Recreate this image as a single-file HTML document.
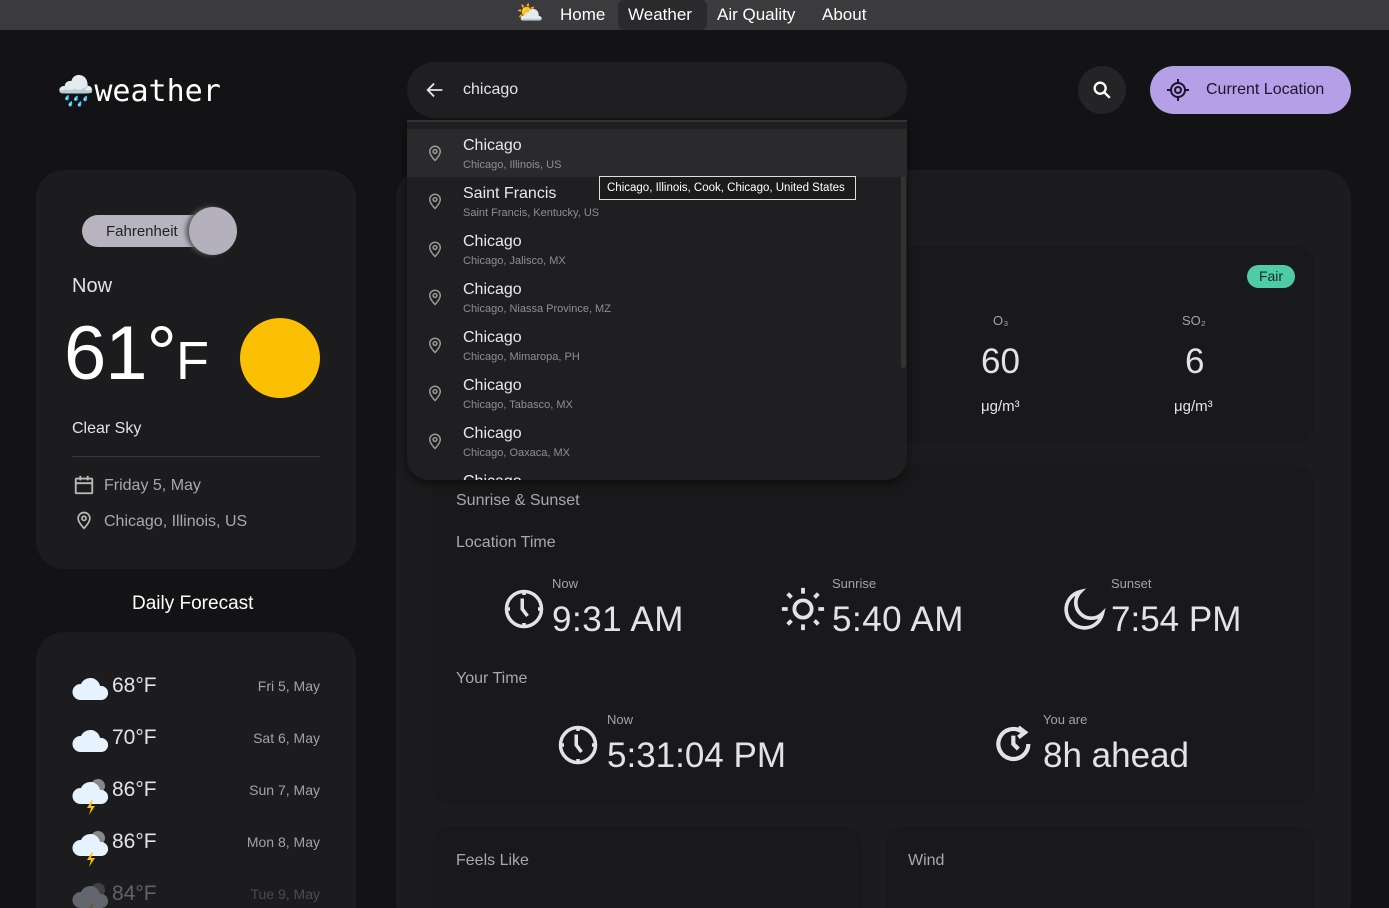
<!DOCTYPE html>
<html><head><meta charset="utf-8"><style>
*{box-sizing:border-box;margin:0;padding:0}
html{width:1389px;height:908px;overflow:hidden}
body{width:1389px;height:908px;overflow:hidden;background:#131315;font-family:"Liberation Sans",sans-serif;color:#e4e2e8;position:relative}
.a{position:absolute}
.nav{left:0;top:0;width:1389px;height:30px;background:#3b3b3d}
.nav span{position:absolute;top:5px;font-size:17px;color:#fff}
.card{background:#1c1c1e;border-radius:28px}
.in{background:#19191b;border-radius:20px}
.g{color:#a9a8ad}
.pin{width:18px;height:22px}
.dd .it{position:absolute;left:0;width:500px;height:48px}
.dd .t{position:absolute;left:56px;top:8px;font-size:16px;color:#e8e8ea}
.dd .s{position:absolute;left:56px;top:30px;font-size:11px;color:#8f8e93}
.dd svg{position:absolute;left:19px;top:13px}
.fc{position:absolute;left:72px;width:250px;height:40px}
.fc svg{position:absolute;left:0;top:2px}
.fc .tp{position:absolute;left:40px;top:6px;font-size:21px}
.fc .dt{position:absolute;right:2px;top:10px;font-size:14px;color:#a3a2a7}
.big{font-size:35px;color:#e4e2e8}
.lbl{font-size:13px;color:#a3a2a7}
</style></head><body>
<svg width="0" height="0" style="position:absolute"><defs>
<g id="cl"><path d="M8 30a8 8 0 0 1 1-16 10 10 0 0 1 19 2 7 7 0 0 1 2 14z" fill="#e6f3ff"/></g>
<g id="st"><circle cx="26" cy="12" r="7" fill="#888"/><path d="M8 30a8 8 0 0 1 1-16 10 10 0 0 1 19 2 7 7 0 0 1 2 14z" fill="#e6f3ff"/><path d="M20 26l-5 8h4l-2 7 6-9h-4l2-6z" fill="#fbbf04"/></g>
</defs></svg>
<div class="a nav">
 <span style="left:516px;top:0;font-size:22px">⛅</span>
 <span style="left:560px">Home</span>
 <div class="a" style="left:618px;top:0;width:89px;height:30px;background:#2a2a2c;border-radius:6px"></div>
 <span style="left:628px">Weather</span>
 <span style="left:717px">Air Quality</span>
 <span style="left:822px">About</span>
</div>

<div class="a" style="left:57px;top:74px;font-size:30px;color:#fff">🌧️<span style="font-family:'DejaVu Sans Mono',monospace">weather</span></div>

<div class="a" style="left:407px;top:62px;width:500px;height:56px;background:#1f1f21;border-radius:28px"></div>
<svg class="a" style="left:424px;top:79px" width="22" height="22" viewBox="0 0 24 24"><path d="M20 12H5M11 5l-7 7 7 7" stroke="#e4e2e8" stroke-width="2" fill="none"/></svg>
<div class="a" style="left:463px;top:81px;font-size:16px">chicago</div>
<div class="a" style="left:1078px;top:66px;width:48px;height:48px;border-radius:50%;background:#242426"></div>
<svg class="a" style="left:1091px;top:79px" width="22" height="22" viewBox="0 0 24 24"><circle cx="10" cy="10" r="6" stroke="#fff" stroke-width="2.5" fill="none"/><path d="M14.5 14.5l6 6" stroke="#fff" stroke-width="2.5"/></svg>
<div class="a" style="left:1150px;top:66px;width:201px;height:48px;border-radius:24px;background:#b59fe6"></div>
<svg class="a" style="left:1166px;top:78px" width="24" height="24" viewBox="0 0 24 24"><circle cx="12" cy="12" r="7" stroke="#1c1530" stroke-width="2" fill="none"/><circle cx="12" cy="12" r="3" stroke="#1c1530" stroke-width="2" fill="none"/><path d="M12 1v4M12 19v4M1 12h4M19 12h4" stroke="#1c1530" stroke-width="2"/></svg>
<div class="a" style="left:1206px;top:81px;font-size:16px;color:#1c1530">Current Location</div>

<div class="a card" style="left:36px;top:170px;width:320px;height:399px"></div>
<div class="a" style="left:82px;top:215px;width:140px;height:32px;border-radius:16px;background:#b7b4bf"></div>
<div class="a" style="left:106px;top:223px;font-size:15px;color:#222">Fahrenheit</div>
<div class="a" style="left:189px;top:207px;width:48px;height:48px;border-radius:50%;background:#b4b1bc;box-shadow:-3px 0 5px #555"></div>
<div class="a" style="left:72px;top:275px;font-size:20px">Now</div>
<div class="a" style="left:64px;top:310px;font-size:76px;color:#fff;letter-spacing:-1px">61°<span style="font-size:54px">F</span></div>
<div class="a" style="left:240px;top:318px;width:80px;height:80px;border-radius:50%;background:#fbbf04"></div>
<div class="a" style="left:72px;top:420px;font-size:16px">Clear Sky</div>
<div class="a" style="left:72px;top:456px;width:248px;height:1px;background:#38383b"></div>
<svg class="a" style="left:73px;top:474px" width="22" height="22" viewBox="0 0 24 24"><rect x="3" y="5" width="18" height="16" rx="1" stroke="#bbb" stroke-width="2" fill="none"/><path d="M3 10h18M8 2v5M16 2v5" stroke="#bbb" stroke-width="2"/></svg>
<div class="a g" style="left:104px;top:477px;font-size:16px">Friday 5, May</div>
<svg class="a" style="left:74px;top:509px" width="20" height="22" viewBox="0 0 24 24"><path d="M12 22s-7-7-7-12a7 7 0 0 1 14 0c0 5-7 12-7 12z" stroke="#bbb" stroke-width="2" fill="none"/><circle cx="12" cy="10" r="2.5" stroke="#bbb" stroke-width="2" fill="none"/></svg>
<div class="a g" style="left:104px;top:513px;font-size:16px">Chicago, Illinois, US</div>

<div class="a" style="left:132px;top:593px;font-size:19px;color:#fff">Daily Forecast</div>
<div class="a card" style="left:36px;top:632px;width:320px;height:300px"></div>
<div class="fc" style="top:668px"><svg width="38" height="42" viewBox="0 0 38 42"><use href="#cl"/></svg><span class="tp">68°F</span><span class="dt">Fri 5, May</span></div>
<div class="fc" style="top:720px"><svg width="38" height="42" viewBox="0 0 38 42"><use href="#cl"/></svg><span class="tp">70°F</span><span class="dt">Sat 6, May</span></div>
<div class="fc" style="top:772px"><svg width="38" height="42" viewBox="0 0 38 42"><use href="#st"/></svg><span class="tp">86°F</span><span class="dt">Sun 7, May</span></div>
<div class="fc" style="top:824px"><svg width="38" height="42" viewBox="0 0 38 42"><use href="#st"/></svg><span class="tp">86°F</span><span class="dt">Mon 8, May</span></div>
<div class="fc" style="top:876px;opacity:.35"><svg width="38" height="42" viewBox="0 0 38 42"><use href="#st"/></svg><span class="tp">84°F</span><span class="dt">Tue 9, May</span></div>

<div class="a card" style="left:396px;top:170px;width:955px;height:760px"></div>
<div class="a in" style="left:432px;top:246px;width:883px;height:198px"></div>
<div class="a" style="left:1247px;top:265px;width:48px;height:23px;border-radius:12px;background:#4fcca6;color:#0f2a22;font-size:14px;text-align:center;line-height:23px">Fair</div>
<div class="a lbl" style="left:993px;top:313px">O₃</div>
<div class="a big" style="left:981px;top:342px">60</div>
<div class="a" style="left:981px;top:398px;font-size:15px">μg/m³</div>
<div class="a lbl" style="left:1182px;top:313px">SO₂</div>
<div class="a big" style="left:1185px;top:342px">6</div>
<div class="a" style="left:1174px;top:398px;font-size:15px">μg/m³</div>

<div class="a in" style="left:432px;top:465px;width:883px;height:340px"></div>
<div class="a g" style="left:456px;top:492px;font-size:16px">Sunrise &amp; Sunset</div>
<div class="a g" style="left:456px;top:534px;font-size:16px">Location Time</div>
<svg class="a" style="left:503px;top:588px" width="42" height="42" viewBox="0 0 24 24"><circle cx="12" cy="12" r="10" stroke="#e4e2e8" stroke-width="2" fill="none"/><path d="M11 6v6l3 4M12 2v2M12 20v2M2 12h2M20 12h2" stroke="#e4e2e8" stroke-width="2" fill="none"/></svg>
<div class="a lbl" style="left:552px;top:576px">Now</div>
<div class="a big" style="left:552px;top:600px;letter-spacing:0.5px">9:31 AM</div>
<svg class="a" style="left:780px;top:586px" width="46" height="46" viewBox="0 0 24 24"><circle cx="12" cy="12" r="4.5" stroke="#e4e2e8" stroke-width="2" fill="none"/><path d="M12 1v3M12 20v3M1 12h3M20 12h3M4 4l2 2M18 18l2 2M4 20l2-2M18 6l2-2" stroke="#e4e2e8" stroke-width="2"/></svg>
<div class="a lbl" style="left:832px;top:576px">Sunrise</div>
<div class="a big" style="left:832px;top:600px;letter-spacing:0.5px">5:40 AM</div>
<svg class="a" style="left:1062px;top:588px" width="44" height="44" viewBox="0 0 24 24"><path d="M10 2a10 10 0 1 0 12 12A8 8 0 0 1 10 2z" stroke="#e4e2e8" stroke-width="2" fill="none"/></svg>
<div class="a lbl" style="left:1111px;top:576px">Sunset</div>
<div class="a big" style="left:1111px;top:600px">7:54 PM</div>
<div class="a g" style="left:456px;top:670px;font-size:16px">Your Time</div>
<svg class="a" style="left:557px;top:724px" width="42" height="42" viewBox="0 0 24 24"><circle cx="12" cy="12" r="10" stroke="#e4e2e8" stroke-width="2" fill="none"/><path d="M11 6v6l3 4M12 2v2M12 20v2M2 12h2M20 12h2" stroke="#e4e2e8" stroke-width="2" fill="none"/></svg>
<div class="a lbl" style="left:607px;top:712px">Now</div>
<div class="a big" style="left:607px;top:736px">5:31:04 PM</div>
<svg class="a" style="left:995px;top:724px" width="40" height="40" viewBox="0 0 24 24"><path d="M20 12a9 9 0 1 1-4-7.5" stroke="#e4e2e8" stroke-width="2.5" fill="none"/><path d="M14 2l4 3-4 3" stroke="#e4e2e8" stroke-width="2.5" fill="none"/><path d="M11 7v5l3 3" stroke="#e4e2e8" stroke-width="2.5" fill="none"/></svg>
<div class="a lbl" style="left:1043px;top:712px">You are</div>
<div class="a big" style="left:1043px;top:736px">8h ahead</div>

<div class="a in" style="left:432px;top:826px;width:431px;height:100px"></div>
<div class="a g" style="left:456px;top:852px;font-size:16px">Feels Like</div>
<div class="a in" style="left:885px;top:826px;width:430px;height:100px"></div>
<div class="a g" style="left:908px;top:852px;font-size:16px">Wind</div>

<div class="a dd" style="left:407px;top:120px;width:500px;height:360px;background:#1f1f21;border-radius:0 0 22px 22px;overflow:hidden;box-shadow:0 4px 10px rgba(0,0,0,.5)">
 <div class="a" style="left:0;top:0;width:500px;height:2px;background:#333"></div>
 <div class="a" style="left:494px;top:20px;width:5px;height:228px;background:#333;border-radius:3px"></div>
 <div class="it" style="top:9px;background:#2a2a2c"><svg class="pin" viewBox="0 0 24 24"><path d="M12 22s-7-7-7-12a7 7 0 0 1 14 0c0 5-7 12-7 12z" stroke="#999" stroke-width="2" fill="none"/><circle cx="12" cy="10" r="2.5" stroke="#999" stroke-width="2" fill="none"/></svg><span class="t">Chicago</span><span class="s">Chicago, Illinois, US</span></div>
 <div class="it" style="top:57px"><svg class="pin" viewBox="0 0 24 24"><path d="M12 22s-7-7-7-12a7 7 0 0 1 14 0c0 5-7 12-7 12z" stroke="#999" stroke-width="2" fill="none"/><circle cx="12" cy="10" r="2.5" stroke="#999" stroke-width="2" fill="none"/></svg><span class="t">Saint Francis</span><span class="s">Saint Francis, Kentucky, US</span></div>
 <div class="it" style="top:105px"><svg class="pin" viewBox="0 0 24 24"><path d="M12 22s-7-7-7-12a7 7 0 0 1 14 0c0 5-7 12-7 12z" stroke="#999" stroke-width="2" fill="none"/><circle cx="12" cy="10" r="2.5" stroke="#999" stroke-width="2" fill="none"/></svg><span class="t">Chicago</span><span class="s">Chicago, Jalisco, MX</span></div>
 <div class="it" style="top:153px"><svg class="pin" viewBox="0 0 24 24"><path d="M12 22s-7-7-7-12a7 7 0 0 1 14 0c0 5-7 12-7 12z" stroke="#999" stroke-width="2" fill="none"/><circle cx="12" cy="10" r="2.5" stroke="#999" stroke-width="2" fill="none"/></svg><span class="t">Chicago</span><span class="s">Chicago, Niassa Province, MZ</span></div>
 <div class="it" style="top:201px"><svg class="pin" viewBox="0 0 24 24"><path d="M12 22s-7-7-7-12a7 7 0 0 1 14 0c0 5-7 12-7 12z" stroke="#999" stroke-width="2" fill="none"/><circle cx="12" cy="10" r="2.5" stroke="#999" stroke-width="2" fill="none"/></svg><span class="t">Chicago</span><span class="s">Chicago, Mimaropa, PH</span></div>
 <div class="it" style="top:249px"><svg class="pin" viewBox="0 0 24 24"><path d="M12 22s-7-7-7-12a7 7 0 0 1 14 0c0 5-7 12-7 12z" stroke="#999" stroke-width="2" fill="none"/><circle cx="12" cy="10" r="2.5" stroke="#999" stroke-width="2" fill="none"/></svg><span class="t">Chicago</span><span class="s">Chicago, Tabasco, MX</span></div>
 <div class="it" style="top:297px"><svg class="pin" viewBox="0 0 24 24"><path d="M12 22s-7-7-7-12a7 7 0 0 1 14 0c0 5-7 12-7 12z" stroke="#999" stroke-width="2" fill="none"/><circle cx="12" cy="10" r="2.5" stroke="#999" stroke-width="2" fill="none"/></svg><span class="t">Chicago</span><span class="s">Chicago, Oaxaca, MX</span></div>
 <div class="it" style="top:345px"><span class="t">Chicago</span></div>
</div>
<div class="a" style="left:599px;top:176px;width:257px;height:24px;background:#1b1b1b;border:1px solid #ddd;color:#fff;font-size:11.5px;line-height:22px;padding-left:7px;white-space:nowrap">Chicago, Illinois, Cook, Chicago, United States</div>
</body></html>
